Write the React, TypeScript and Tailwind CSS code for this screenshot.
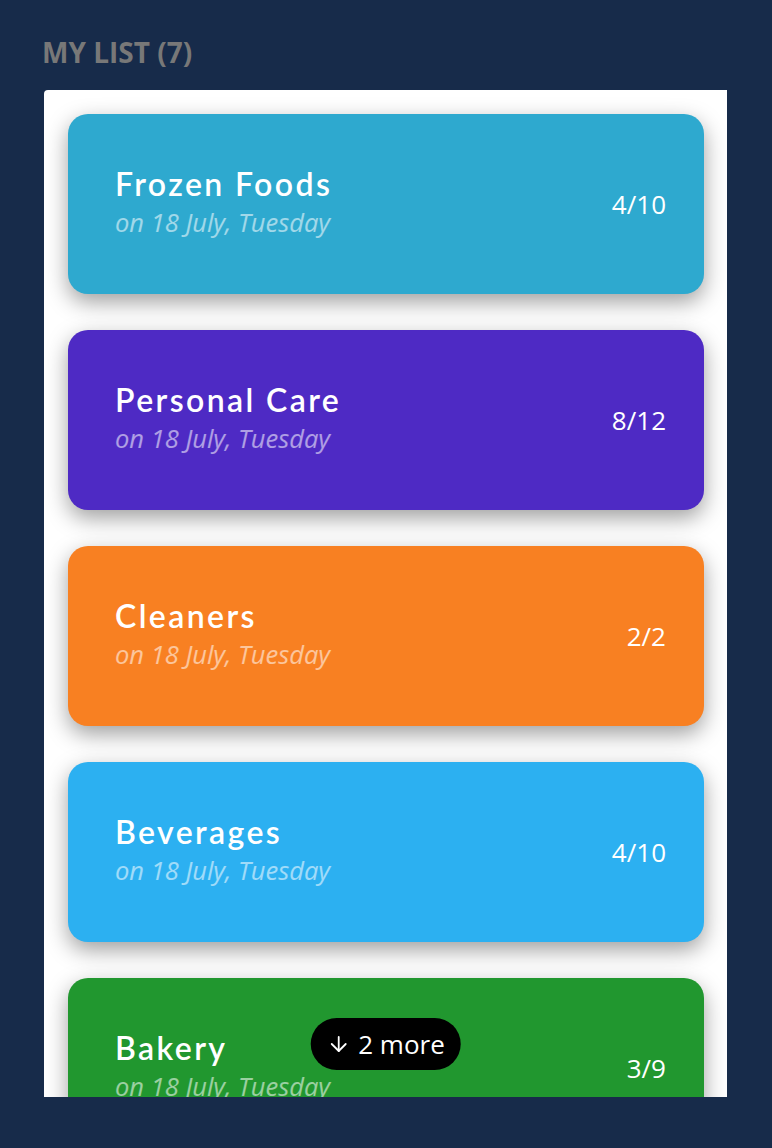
import { ArrowDown } from "lucide-react";

const lists = [
  { name: "Frozen Foods", count: "4/10", color: "bg-[#2ea9cf]" },
  { name: "Personal Care", count: "8/12", color: "bg-[#4e2ac4]" },
  { name: "Cleaners", count: "2/2", color: "bg-[#f88022]" },
  { name: "Beverages", count: "4/10", color: "bg-[#2cb0f1]" },
  { name: "Bakery", count: "3/9", color: "bg-[#21972f]" },
];

export default function App() {
  return (
    <div className="min-h-[1148px] w-full bg-[#172b4a] px-[44px] pt-[33px]">
      {/* Header */}
      <h1 className="-ml-[2px] font-['Open_Sans',sans-serif] text-[28px] font-bold leading-[38px] text-[#787878]">
        MY LIST (7)
      </h1>

      {/* Scrolling panel */}
      <div className="relative mt-[19px] h-[1007px] w-[683px] overflow-hidden rounded-tl-[4px] bg-white">
        <div className="flex flex-col gap-[36px] pl-[24px] pr-[23px] pt-[24px]">
          {lists.map((item) => (
            <div
              key={item.name}
              className={`${item.color} flex h-[180px] shrink-0 items-center justify-between rounded-[20px] pl-[47px] pr-[38px] shadow-[0_8px_22px_rgba(0,0,0,0.38)]`}
            >
              <div className="flex flex-col">
                <span className="font-['Lato',sans-serif] text-[32px] font-semibold leading-[36px] tracking-[2.4px] text-white">
                  {item.name}
                </span>
                <span className="font-['Open_Sans',sans-serif] text-[25.5px] italic leading-[40px] text-white/55">
                  on 18 July, Tuesday
                </span>
              </div>
              <span className="font-['Open_Sans',sans-serif] text-[26px] text-white">
                {item.count}
              </span>
            </div>
          ))}
        </div>

        {/* More indicator */}
        <div className="absolute bottom-[27px] left-1/2 flex h-[52px] -translate-x-1/2 items-center gap-[8px] rounded-full bg-black pl-[16px] pr-[16px] font-['Open_Sans',sans-serif] text-[26px] text-white">
          <ArrowDown className="h-[24px] w-[24px]" strokeWidth={1.8} />
          <span>2 more</span>
        </div>
      </div>
    </div>
  );
}
